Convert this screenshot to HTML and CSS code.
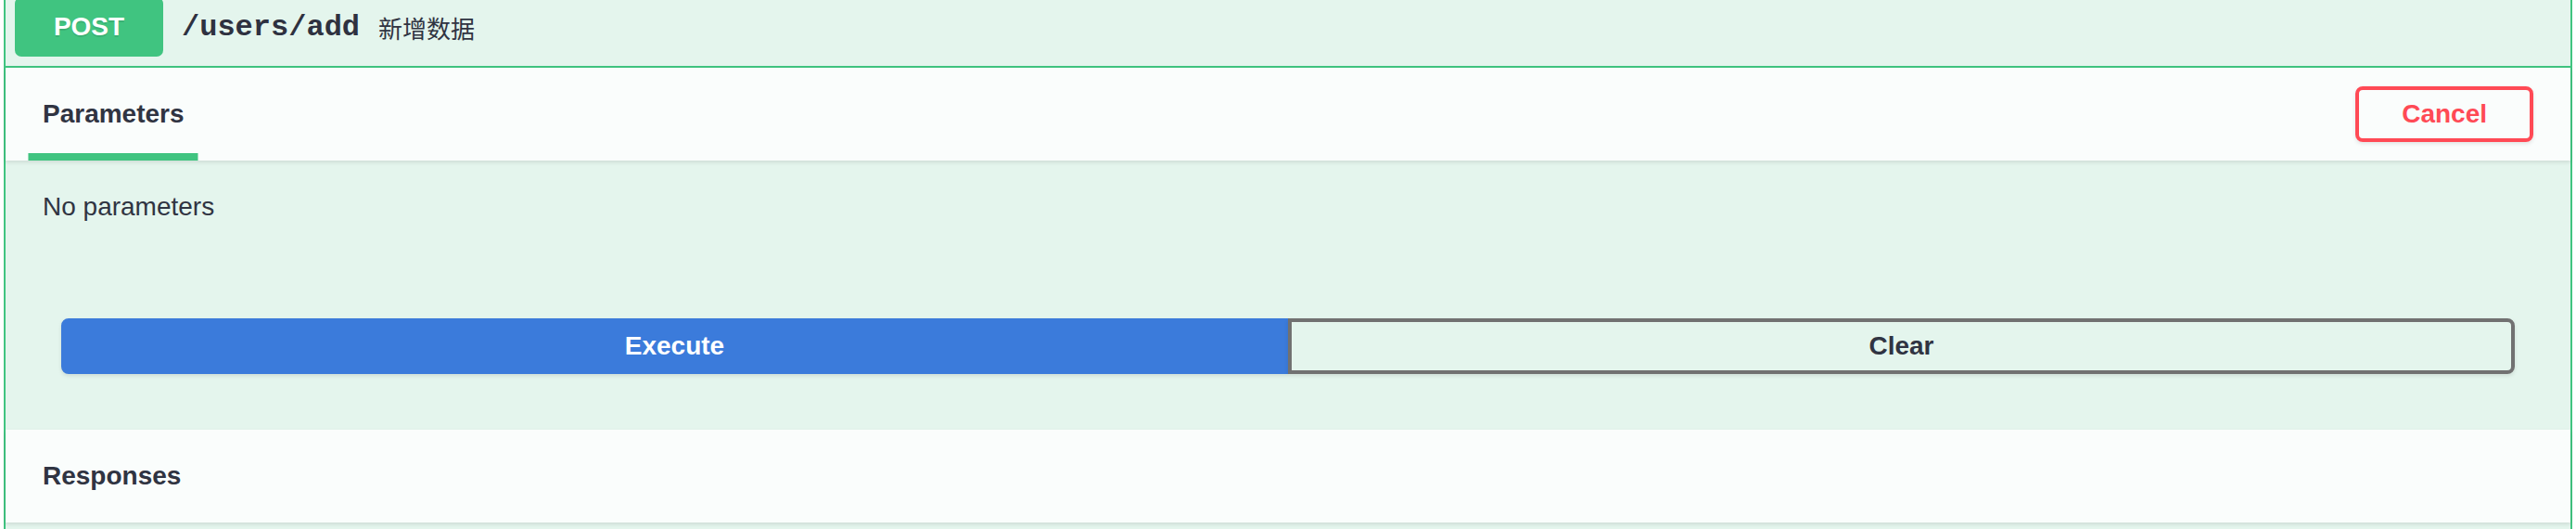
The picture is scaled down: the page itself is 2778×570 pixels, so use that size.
FILE: index.html
```
<!DOCTYPE html>
<html lang="zh-CN">
<head>
<meta charset="utf-8">
<title>POST /users/add</title>
<link rel="stylesheet" href="styles.css">
</head>
<body>
<div class="opblock">
  <div class="summary">
    <span class="method">POST</span>
    <span class="path">/users/add</span>
    <span class="desc">新增数据</span>
  </div>
  <div class="opbody">
    <div class="section-header tabs">
      <div class="tab-item"><h4><span>Parameters</span></h4></div>
      <button class="btn cancel">Cancel</button>
    </div>
    <div class="desc-wrapper"><p>No parameters</p></div>
    <div class="btn-group">
      <button class="btn execute">Execute</button>
      <button class="btn clear">Clear</button>
    </div>
    <div class="section-header resp"><h4>Responses</h4></div>
    <div class="resp-body"></div>
  </div>
</div>
</body>
</html>
```

FILE: styles.css
```
html, body {
  margin: 0;
  background: #ffffff;
}
body {
  font-family: "Liberation Sans", Arial, sans-serif;
  color: #303442;
  overflow: hidden;
}
.opblock {
  margin: -15px 4px 0;
  border: 2px solid #40c480;
  border-radius: 8px;
  background: #e4f5ed;
}
.summary {
  display: flex;
  align-items: center;
  padding: 10px;
  border-bottom: 2px solid #40c480;
}
.method {
  min-width: 160px;
  padding: 12px 0;
  line-height: 40px;
  font-size: 28px;
  font-weight: 700;
  text-align: center;
  background: #40c480;
  color: #ffffff;
  border-radius: 7px;
  text-shadow: 0 2px 0 rgba(0,0,0,.1);
}
.path {
  font-family: "Liberation Mono", "Courier New", monospace;
  font-size: 32px;
  font-weight: 700;
  padding: 0 20px;
  color: #2e3140;
}
.desc {
  font-family: "Liberation Sans", "Noto Sans CJK SC", sans-serif;
  font-size: 26px;
  color: #303442;
}
.section-header {
  display: flex;
  align-items: center;
  box-sizing: border-box;
  min-height: 100px;
  padding: 0 40px;
  background: #fafdfc;
  box-shadow: 0 2px 4px rgba(0,0,0,.1);
  position: relative;
}
h4 {
  margin: 0;
  font-size: 28px;
  font-weight: 700;
}
.tab-item {
  align-self: stretch;
  display: flex;
  align-items: center;
  position: relative;
}
.tab-item::after {
  content: "";
  position: absolute;
  left: 50%;
  bottom: 0;
  width: 120%;
  height: 8px;
  transform: translateX(-50%);
  background: #40c480;
}
.btn {
  font-family: "Liberation Sans", Arial, sans-serif;
  font-size: 28px;
  font-weight: 700;
  line-height: normal;
  padding: 10px 46px;
  border: 4px solid #717171;
  border-radius: 8px;
  background: transparent;
  color: #303442;
  box-shadow: 0 2px 4px rgba(0,0,0,.1);
}
.cancel {
  margin-left: auto;
  border-color: #ff4a55;
  color: #ff4a55;
}
.desc-wrapper {
  padding: 30px 40px;
  margin-bottom: 10px;
}
.desc-wrapper p {
  margin: 0;
  font-size: 28px;
  line-height: 40px;
}
.btn-group {
  display: flex;
  padding: 60px;
}
.btn-group .btn {
  flex: 2;
}
.execute {
  background: #3b7bdb;
  border-color: #3b7bdb;
  color: #ffffff;
  border-radius: 8px 0 0 8px;
}
.clear {
  border-radius: 0 8px 8px 0;
}
.resp-body {
  height: 40px;
}
```
